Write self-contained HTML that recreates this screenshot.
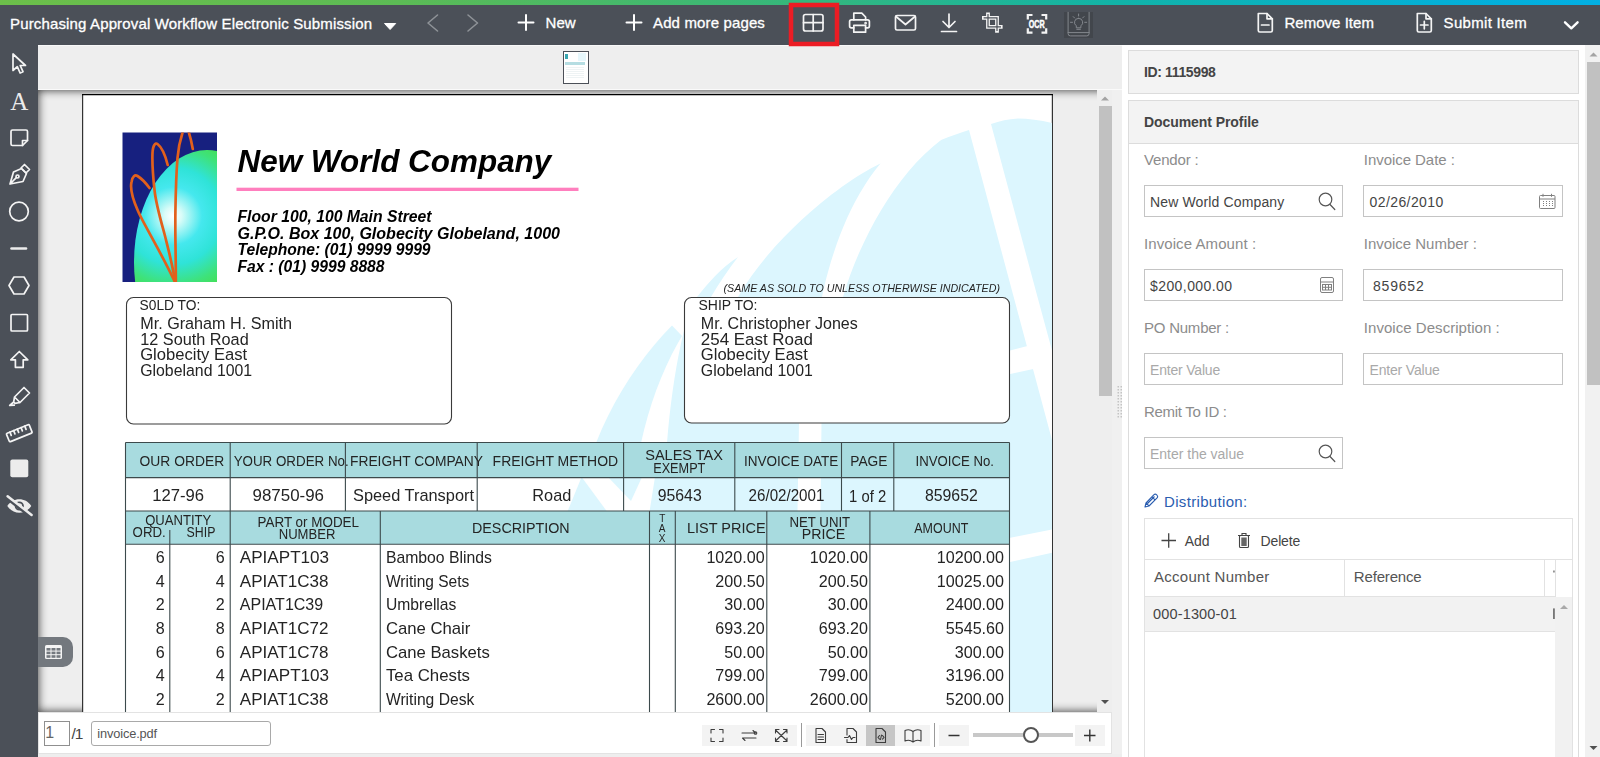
<!DOCTYPE html>
<html lang="en"><head><meta charset="utf-8"><title>Purchasing Approval Workflow Electronic Submission</title>
<style>
*{box-sizing:border-box}
html,body{margin:0;padding:0}
body{width:1600px;height:757px;overflow:hidden;position:relative;background:#fff;font-family:"Liberation Sans",sans-serif;}
.t{position:absolute;line-height:1;white-space:nowrap}
.abs{position:absolute}
#grad{left:0;top:0;width:1600px;height:5px;background:linear-gradient(90deg,#6cbf4a 0%,#5cbb55 25%,#35b77c 50%,#12b3a8 70%,#04b0d6 90%,#02afe3 100%)}
#topbar{left:0;top:5px;width:1600px;height:40px;background:#4b5058}
#side{left:0;top:45px;width:38px;height:712px;background:#4b5058}
#thumbs{left:38px;top:45px;width:1084px;height:45px;background:#eee;border-top:1px solid #f8f8f8;border-bottom:1px solid #fafafa}
#viewer{left:38px;top:90px;width:1074px;height:622px;background:#eee;overflow:hidden;box-shadow:inset 0 0 10px rgba(0,0,0,.8)}
#vscroll{left:1097px;top:90px;width:15px;height:622px;background:#eee}
#gap{left:1112px;top:90px;width:10px;height:667px;background:#f0f0f0}
#bbar{left:38px;top:712px;width:1074px;height:42px;background:#fff;border:1px solid #e3e3e3}
#bfoot{left:38px;top:754px;width:1084px;height:3px;background:#eee}
#panel{left:1122px;top:45px;width:478px;height:712px;background:#fff}
svg{position:absolute;overflow:visible}
svg text{font-family:"Liberation Sans",sans-serif}
.ic{fill:none;stroke:#f4f4f4;stroke-width:1.7;stroke-linecap:round;stroke-linejoin:round}
.inp{position:absolute;background:#fff;border:1px solid #c4c4c4;height:32px}
.box{position:absolute;background:#f3f3f3;border:1px solid #dcdcdc}
</style></head><body>

<div id="grad" class="abs"></div><div id="topbar" class="abs"></div><div id="side" class="abs"></div>
<div id="thumbs" class="abs"></div>
<div class="abs" id="toptext" style="left:0;top:0;width:1600px;height:45px;-webkit-text-stroke:0.300px #fff">
<span class="t" style="left:10.0px;top:16.3px;font-size:15px;color:#fff;letter-spacing:0.146px;">Purchasing Approval Workflow Electronic Submission</span>
<span class="t" style="left:545.5px;top:15.3px;font-size:15px;color:#fff;letter-spacing:0.098px;">New</span>
<span class="t" style="left:653.0px;top:15.3px;font-size:15px;color:#fff;letter-spacing:0.138px;">Add more pages</span>
<span class="t" style="left:1284.5px;top:15.3px;font-size:15px;color:#fff;letter-spacing:0.019px;">Remove Item</span>
<span class="t" style="left:1443.6px;top:15.3px;font-size:15px;color:#fff;letter-spacing:0.307px;">Submit Item</span>
</div>
<svg class="abs" style="left:0;top:0" width="1600" height="46" viewBox="0 0 1600 46">
<path d="M384.5 23.5h11.2l-5.6 6z" fill="#fff" stroke="#fff" stroke-width="1" stroke-linejoin="round"/>
<path d="M437.5 15l-9.5 8 9.5 8" fill="none" stroke="#8e9297" stroke-width="1.6" stroke-linecap="round" stroke-linejoin="round"/>
<path d="M468 15l9.5 8-9.5 8" fill="none" stroke="#8e9297" stroke-width="1.6" stroke-linecap="round" stroke-linejoin="round"/>
<path d="M518.5 22.5h15M526 15v15" stroke="#fff" stroke-width="2" stroke-linecap="round"/>
<path d="M626.5 22.5h15M634 15v15" stroke="#fff" stroke-width="2" stroke-linecap="round"/>
<rect x="791" y="5" width="46" height="39" fill="none" stroke="#ec1c24" stroke-width="4.5"/>
<g class="ic"><rect x="803.5" y="14.5" width="19.5" height="16.5" rx="2"/><path d="M813.2 14.5v16.5M803.5 22.7h19.5"/></g>
<g class="ic" stroke-width="1.800"><path d="M853.800 19.800v-6.600h8l3.800 3.800v2.800"/><path d="M853.800 27.800h-2.400a1.800 1.800 0 0 1-1.800-1.800v-4.400a1.800 1.800 0 0 1 1.800-1.800h16.200a1.800 1.800 0 0 1 1.800 1.800v4.400a1.800 1.800 0 0 1-1.800 1.800h-2"/><path d="M853.800 25.300v6.900h11.800v-6.900z"/><circle cx="865.600" cy="23.200" r=".500" fill="#fff"/></g>
<g class="ic"><rect x="895.5" y="15.5" width="20" height="14.5" rx="1.5"/><path d="M896 16.5l9.500 8 9.500-8"/></g>
<g class="ic"><path d="M949 14v13M943 21.500l6 6 6-6M941.500 31.500h15"/></g>
<g fill="none" stroke-linejoin="miter"><path d="M988 12.400V26.800H1002.600M982 17.800H997V32.700" stroke="#f4f4f4" stroke-width="3.800"/><path d="M988 14V26.800H1001M983.600 17.800H997V31.100" stroke="#4b5058" stroke-width="1.200"/></g>
<g fill="none" stroke="#f4f4f4" stroke-width="2.200"><path d="M1027.800 19.500v-4.500h4.700M1041.500 15h4.700v4.500M1046.200 28.200v4.500h-4.700M1032.500 32.700h-4.700v-4.500"/></g>
<text x="1028.7" y="27.7" font-size="10.8" font-weight="bold" textLength="16.0" lengthAdjust="spacingAndGlyphs" fill="#fff" stroke="#fff" stroke-width=".500">OCR</text>
<rect x="1064" y="12" width="29" height="26" fill="#42464c"/>
<g fill="none" stroke="#84888e" stroke-width="1" stroke-linecap="round"><path d="M1068.100 12.300v21.300a2.300 2.300 0 0 0 2.300 2.300h16.400a2.300 2.300 0 0 0 2.300-2.300v-21.300"/><path d="M1068.100 32.600h21"/><path d="M1078.600 18.300a4.100 4.100 0 0 0-2.300 7.500v2h4.600v-2a4.100 4.100 0 0 0-2.300-7.500zM1076.800 29.300h3.600M1078.600 14v2M1070.500 22.300h2M1084.700 22.300h2M1073.200 16.600l1.400 1.400M1084 16.600l-1.400 1.400"/></g>
<g class="ic"><path d="M1258.300 13.500h8.700l5.300 5.300v11.700a1.500 1.500 0 0 1-1.500 1.500h-11a1.500 1.500 0 0 1-1.500-1.500z"/><path d="M1267 13.500v5.300h5.300M1261.500 25h7.500"/></g>
<g class="ic"><path d="M1417.300 13.500h8.700l5.300 5.300v11.700a1.500 1.500 0 0 1-1.500 1.500h-11a1.500 1.500 0 0 1-1.500-1.500z"/><path d="M1426 13.500v5.300h5.300M1420.500 25h7.500M1424.300 21.300v7.500"/></g>
<path d="M1565 22.300l6.300 6 6.300-6" fill="none" stroke="#fff" stroke-width="2.4" stroke-linecap="round" stroke-linejoin="round"/>
</svg>
<svg class="abs" style="left:0;top:45px" width="38" height="712" viewBox="0 45 38 712">
<g class="ic" stroke="#ececec">
<path d="M13 54v16.500l4.300-3.800 2.800 6.300 2.900-1.300-2.800-6.200h5.300z"/>
<path d="M12.500 130h13.500a1.500 1.500 0 0 1 1.500 1.500v9l-5 5h-10a1.500 1.500 0 0 1-1.500-1.500v-12.500a1.500 1.500 0 0 1 1.500-1.500z"/><path d="M27.500 140.500h-5v5"/>
<path d="M10 184l3.500-12 8-3.500 5 5-3.500 8zM10 184l6.300-6.300"/><circle cx="17.500" cy="176.500" r="1.500"/><path d="M21 168l3.500-3.500 5 5-3.500 3.500z"/>
<circle cx="19" cy="211.500" r="9.300"/>
<path d="M9 285.500l5-8.500h10l5 8.500-5 8.500h-10z"/>
<rect x="11" y="314.500" width="16.500" height="16.500" rx="1"/>
<path d="M19.300 351.500l8.500 8.300h-4.600v7.500h-7.800v-7.500h-4.600z"/>
<path d="M14.500 397l9.500-9.500 5.500 5.500-9.500 9.500-5 .8-1.300-1.300zM14.500 397l5.500 5.500M13.700 402l-4 3.500 4.500-.3"/>
<g transform="rotate(-22 19.300 433.200)"><rect x="7" y="428.700" width="24.600" height="9" rx="1"/><path d="M11 428.700v3.500M15 428.700v3.500M19 428.700v3.500M23 428.700v3.500M27 428.700v3.500"/></g>
</g>
<path d="M11.500 248.500h14.500" stroke="#ececec" stroke-width="2.600" stroke-linecap="round"/>
<rect x="10.300" y="459.500" width="18" height="17.700" rx="2" fill="#ececec"/>
<path d="M7.300 506c3.200-4.700 7.300-6.700 12-6.700s8.800 2 12 6.700c-3.200 4.700-7.300 6.700-12 6.700s-8.800-2-12-6.700z" fill="#ececec"/><circle cx="19.300" cy="506" r="3.700" fill="none" stroke="#4b5058" stroke-width="1.800"/><path d="M5.800 497.200l25 19.600" stroke="#4b5058" stroke-width="3.200"/><path d="M7.600 496.200l24 18.700" stroke="#ececec" stroke-width="2.500" stroke-linecap="round"/>
</svg>
<span class="t" style="left:10.3px;top:88.5px;font-size:25px;color:#ececec;letter-spacing:-0.654px;font-family:'Liberation Serif',serif;">A</span>
<div class="abs" style="left:563px;top:51px;width:26px;height:33px;border:1.500px solid #4b5058;background:#fff;overflow:hidden">
<div class="abs" style="left:1px;top:2px;width:3px;height:5px;background:#3aa6b0"></div><div class="abs" style="left:1px;top:10px;width:20px;height:3px;background:#b5dde2"></div><div class="abs" style="left:14px;top:1px;width:8px;height:8px;background:#e6f7fc"></div><div class="abs" style="left:2px;top:14px;width:18px;height:13px;background:repeating-linear-gradient(180deg,#fff 0,#fff 1px,#eef3f4 1px,#eef3f4 2px)"></div>
</div>
<div id="viewer" class="abs">
<svg class="abs" style="left:0;top:0;will-change:transform" width="1074" height="622" viewBox="38 90 1074 622">
<defs><radialGradient id="glb" gradientUnits="userSpaceOnUse" cx="173" cy="216" r="88"><stop offset="0" stop-color="#ffffff"/><stop offset="0.1" stop-color="#d8fcf8"/><stop offset="0.33" stop-color="#45e8ee"/><stop offset="0.55" stop-color="#2fe3d8"/><stop offset="0.78" stop-color="#3ee27a"/><stop offset="1" stop-color="#48dd40"/></radialGradient><clipPath id="lg"><rect x="122.500" y="132.500" width="94.500" height="149.500"/></clipPath><clipPath id="pgc"><rect x="83" y="95" width="969" height="640"/></clipPath></defs>
<rect x="82" y="94" width="971" height="640" fill="#fff"/><path d="M82.600 94v640M1052.400 94v640" stroke="#333" stroke-width="1.200"/><path d="M82 94.600h971" stroke="#000" stroke-width="1.300"/>
<g clip-path="url(#pgc)" fill="#dcf6fe">
<path d="M672 325.500L682 336C664 366 650 402 641 443L641 470L597 470L596 443C614 398 640 358 672 325.500z"/><path d="M581.600 477L606.600 511L567.700 511z"/><path d="M608 477L642 477L631 501z"/>
<path d="M738 257C721 268 709 282 697 297 C 684 315 672 380 667 443 L 655 477 L 649.600 511 L 700 511 L 1060 511 L 1060 118 L1052 123 C1040 120 1028 118.500 1018 118.500 C 1008 119 1000 121 991 124 L969 130 C 960 133 950 136 941 140 C 918 150 898 158 880.400 163.400 C 838 184 772 238 738 297 L 711 297 C 719 283 728 270 738 257z"/>
<rect x="1009" y="505" width="44" height="240"/>
</g>
<g clip-path="url(#pgc)" fill="#fff">
<path d="M880.400 163.400 C 850 200 832 250 822 297 C 812 345 801 390 799 423 L 797.500 511 L 820.500 511 L 821.500 423 C 824 390 832 345 843 297 C 860 240 895 175 941 140 L 935 120 L 872 148z"/>
<path d="M966.300 120 L 989.900 120 L 991 124 L 1037.500 297 L 1060 380 L 1060 470 L 1013.700 297 L 969 130z"/>
<path d="M1009 350.700 L 1028.500 345.700 L 1034.500 368.800 L 1009 374.200z"/>
<path d="M1009 538 L 1053 529.400 L 1053 552.600 L 1009 562.200z"/>
<path d="M600 478 L 575 511 L 604 511 L 636 478z" fill="none"/>
</g>
<g clip-path="url(#lg)"><rect x="122" y="132" width="96" height="151" fill="#17207f"/><ellipse cx="207" cy="262" rx="73" ry="112" fill="url(#glb)"/>
<g fill="none" stroke="#e2601c" stroke-width="2.700" stroke-linecap="round"><path d="M175.400 283C160 250 144 225 138 211c-5-11-8-22-6.500-29 1-6 3.500-7.500 6-6 5 3 9 8 12 12"/><path d="M175.400 283C172 262 168 248 164.500 234c-5-18-8.500-30-10-44-1.500-14-2.500-26-2-37 .4-8 2.800-10.500 5-9 4 3 8 12 10.200 21"/><path d="M175.800 283C176 260 175 235 175.400 212c.3-20 .8-38 2.100-54 .9-10 2.500-18 5.500-27M188.400 131c2 6 3.300 12 4.400 18"/></g></g>
<text x="237.5" y="172.0" font-size="31.5" font-weight="bold" font-style="italic" textLength="313.8" lengthAdjust="spacingAndGlyphs" fill="#000">New World Company</text>
<rect x="236.500" y="187.700" width="342" height="3.300" fill="#ff7fbe"/>
<text x="237.5" y="222.1" font-size="16" font-weight="bold" font-style="italic" textLength="194.0" lengthAdjust="spacingAndGlyphs" fill="#000">Floor 100, 100 Main Street</text>
<text x="237.5" y="238.7" font-size="16" font-weight="bold" font-style="italic" textLength="322.5" lengthAdjust="spacingAndGlyphs" fill="#000">G.P.O. Box 100, Globecity Globeland, 1000</text>
<text x="237.5" y="255.3" font-size="16" font-weight="bold" font-style="italic" textLength="193.0" lengthAdjust="spacingAndGlyphs" fill="#000">Telephone: (01) 9999 9999</text>
<text x="237.5" y="271.9" font-size="16" font-weight="bold" font-style="italic" textLength="147.0" lengthAdjust="spacingAndGlyphs" fill="#000">Fax : (01) 9999 8888</text>
<rect x="126.500" y="297.500" width="325" height="126.500" rx="7" fill="#fff" stroke="#3a3a3a" stroke-width="1.100"/>
<rect x="684.500" y="297.500" width="325" height="125.500" rx="7" fill="#fff" stroke="#3a3a3a" stroke-width="1.100"/>
<text x="723.5" y="292.0" font-size="10.5" font-style="italic" textLength="276.5" lengthAdjust="spacingAndGlyphs" fill="#242424">(SAME AS SOLD TO UNLESS OTHERWISE INDICATED)</text>
<text x="139.6" y="310.0" font-size="14" textLength="60.7" lengthAdjust="spacingAndGlyphs" fill="#242424">S0LD TO:</text>
<text x="698.5" y="310.0" font-size="14" textLength="59.0" lengthAdjust="spacingAndGlyphs" fill="#242424">SHIP TO:</text>
<text x="140.2" y="329.0" font-size="16.3" textLength="151.8" lengthAdjust="spacingAndGlyphs" fill="#242424">Mr. Graham H. Smith</text>
<text x="140.2" y="344.6" font-size="16.3" textLength="108.5" lengthAdjust="spacingAndGlyphs" fill="#242424">12 South Road</text>
<text x="140.2" y="360.3" font-size="16.3" textLength="107.0" lengthAdjust="spacingAndGlyphs" fill="#242424">Globecity East</text>
<text x="140.2" y="375.9" font-size="16.3" textLength="112.0" lengthAdjust="spacingAndGlyphs" fill="#242424">Globeland 1001</text>
<text x="700.8" y="329.0" font-size="16.3" textLength="157.0" lengthAdjust="spacingAndGlyphs" fill="#242424">Mr. Christopher Jones</text>
<text x="700.8" y="344.6" font-size="16.3" textLength="112.0" lengthAdjust="spacingAndGlyphs" fill="#242424">254 East Road</text>
<text x="700.8" y="360.3" font-size="16.3" textLength="107.0" lengthAdjust="spacingAndGlyphs" fill="#242424">Globecity East</text>
<text x="700.8" y="375.9" font-size="16.3" textLength="112.0" lengthAdjust="spacingAndGlyphs" fill="#242424">Globeland 1001</text>
<rect x="125.500" y="442.500" width="884" height="35" fill="#a8dbdf"/>
<rect x="125.500" y="511" width="884" height="33.200" fill="#a8dbdf"/>
<rect x="125.500" y="544.200" width="884" height="190" fill="#fff"/>
<rect x="125.500" y="477.500" width="352" height="33.500" fill="#fff"/>
<g stroke="#3c4a4c" stroke-width="1.100" fill="none">
<path d="M125.500 442.500h884M125.500 477.600h884M125.500 511h884M125.500 544.200h884"/>
<path d="M125.500 442.500v300M1009.500 442.500v300"/>
<path d="M230.2 442.500v68.500"/>
<path d="M345.4 442.500v68.500"/>
<path d="M477.2 442.500v68.500"/>
<path d="M623.6 442.500v68.500"/>
<path d="M734.8 442.500v68.500"/>
<path d="M841.5 442.500v68.500"/>
<path d="M893.8 442.500v68.500"/>
<path d="M169.800 530v212"/>
<path d="M230.2 511v231"/>
<path d="M380.3 511v231"/>
<path d="M649.5 511v231"/>
<path d="M675.3 511v231"/>
<path d="M766.8 511v231"/>
<path d="M869.9 511v231"/>
</g>
<text x="139.6" y="466.0" font-size="14" textLength="84.6" lengthAdjust="spacingAndGlyphs" fill="#242424">OUR ORDER</text>
<text x="233.7" y="466.0" font-size="14" textLength="115.0" lengthAdjust="spacingAndGlyphs" fill="#242424">YOUR ORDER No.</text>
<text x="350.0" y="466.0" font-size="14" textLength="133.0" lengthAdjust="spacingAndGlyphs" fill="#242424">FREIGHT COMPANY</text>
<text x="492.6" y="466.0" font-size="14" textLength="125.5" lengthAdjust="spacingAndGlyphs" fill="#242424">FREIGHT METHOD</text>
<text x="645.2" y="459.6" font-size="14" textLength="77.8" lengthAdjust="spacingAndGlyphs" fill="#242424">SALES TAX</text>
<text x="653.2" y="472.7" font-size="14" textLength="52.2" lengthAdjust="spacingAndGlyphs" fill="#242424">EXEMPT</text>
<text x="744.0" y="466.0" font-size="14" textLength="94.4" lengthAdjust="spacingAndGlyphs" fill="#242424">INVOICE DATE</text>
<text x="850.3" y="466.0" font-size="14" textLength="37.2" lengthAdjust="spacingAndGlyphs" fill="#242424">PAGE</text>
<text x="915.6" y="466.0" font-size="14" textLength="78.3" lengthAdjust="spacingAndGlyphs" fill="#242424">INVOICE No.</text>
<text x="152.2" y="500.8" font-size="16.4" textLength="51.9" lengthAdjust="spacingAndGlyphs" fill="#242424">127-96</text>
<text x="252.5" y="500.8" font-size="16.4" textLength="71.5" lengthAdjust="spacingAndGlyphs" fill="#242424">98750-96</text>
<text x="353.0" y="500.8" font-size="16.4" textLength="121.0" lengthAdjust="spacingAndGlyphs" fill="#242424">Speed Transport</text>
<text x="532.3" y="500.8" font-size="16.4" textLength="39.0" lengthAdjust="spacingAndGlyphs" fill="#242424">Road</text>
<text x="657.7" y="500.8" font-size="16.4" textLength="44.0" lengthAdjust="spacingAndGlyphs" fill="#242424">95643</text>
<text x="748.6" y="500.8" font-size="16.4" textLength="75.8" lengthAdjust="spacingAndGlyphs" fill="#242424">26/02/2001</text>
<text x="849.1" y="502.0" font-size="16.4" textLength="37.1" lengthAdjust="spacingAndGlyphs" fill="#242424">1 of 2</text>
<text x="924.9" y="500.8" font-size="16.4" textLength="52.9" lengthAdjust="spacingAndGlyphs" fill="#242424">859652</text>
<text x="145.2" y="524.5" font-size="14" textLength="66.0" lengthAdjust="spacingAndGlyphs" fill="#242424">QUANTITY</text>
<text x="132.6" y="536.6" font-size="14" textLength="33.1" lengthAdjust="spacingAndGlyphs" fill="#242424">ORD.</text>
<text x="186.6" y="536.6" font-size="14" textLength="28.8" lengthAdjust="spacingAndGlyphs" fill="#242424">SHIP</text>
<text x="257.6" y="526.8" font-size="14" textLength="101.4" lengthAdjust="spacingAndGlyphs" fill="#242424">PART or MODEL</text>
<text x="278.7" y="538.9" font-size="14" textLength="56.7" lengthAdjust="spacingAndGlyphs" fill="#242424">NUMBER</text>
<text x="472.0" y="533.1" font-size="14" textLength="97.7" lengthAdjust="spacingAndGlyphs" fill="#242424">DESCRIPTION</text>
<text x="662.2" y="522.2" font-size="10" text-anchor="middle" fill="#242424">T</text>
<text x="662.2" y="532.0" font-size="10" text-anchor="middle" fill="#242424">A</text>
<text x="662.2" y="541.8" font-size="10" text-anchor="middle" fill="#242424">X</text>
<text x="687.0" y="533.1" font-size="14" textLength="78.6" lengthAdjust="spacingAndGlyphs" fill="#242424">LIST PRICE</text>
<text x="789.5" y="527.3" font-size="14" textLength="60.7" lengthAdjust="spacingAndGlyphs" fill="#242424">NET UNIT</text>
<text x="801.8" y="539.1" font-size="14" textLength="43.4" lengthAdjust="spacingAndGlyphs" fill="#242424">PRICE</text>
<text x="914.3" y="533.1" font-size="14" textLength="54.0" lengthAdjust="spacingAndGlyphs" fill="#242424">AMOUNT</text>
<text x="164.7" y="563.0" font-size="16.1" text-anchor="end" fill="#242424">6</text>
<text x="224.7" y="563.0" font-size="16.1" text-anchor="end" fill="#242424">6</text>
<text x="239.8" y="563.0" font-size="16.1" textLength="89.3" lengthAdjust="spacingAndGlyphs" fill="#242424">APIAPT103</text>
<text x="385.9" y="563.0" font-size="16.1" textLength="106.1" lengthAdjust="spacingAndGlyphs" fill="#242424">Bamboo Blinds</text>
<text x="764.6" y="563.0" font-size="16.1" text-anchor="end" fill="#242424">1020.00</text>
<text x="868.0" y="563.0" font-size="16.1" text-anchor="end" fill="#242424">1020.00</text>
<text x="1004.0" y="563.0" font-size="16.1" text-anchor="end" fill="#242424">10200.00</text>
<text x="164.7" y="586.6" font-size="16.1" text-anchor="end" fill="#242424">4</text>
<text x="224.7" y="586.6" font-size="16.1" text-anchor="end" fill="#242424">4</text>
<text x="239.8" y="586.6" font-size="16.1" textLength="88.6" lengthAdjust="spacingAndGlyphs" fill="#242424">APIAT1C38</text>
<text x="385.9" y="586.6" font-size="16.1" textLength="83.4" lengthAdjust="spacingAndGlyphs" fill="#242424">Writing Sets</text>
<text x="764.6" y="586.6" font-size="16.1" text-anchor="end" fill="#242424">200.50</text>
<text x="868.0" y="586.6" font-size="16.1" text-anchor="end" fill="#242424">200.50</text>
<text x="1004.0" y="586.6" font-size="16.1" text-anchor="end" fill="#242424">10025.00</text>
<text x="164.7" y="610.2" font-size="16.1" text-anchor="end" fill="#242424">2</text>
<text x="224.7" y="610.2" font-size="16.1" text-anchor="end" fill="#242424">2</text>
<text x="239.8" y="610.2" font-size="16.1" textLength="83.4" lengthAdjust="spacingAndGlyphs" fill="#242424">APIAT1C39</text>
<text x="385.9" y="610.2" font-size="16.1" textLength="70.5" lengthAdjust="spacingAndGlyphs" fill="#242424">Umbrellas</text>
<text x="764.6" y="610.2" font-size="16.1" text-anchor="end" fill="#242424">30.00</text>
<text x="868.0" y="610.2" font-size="16.1" text-anchor="end" fill="#242424">30.00</text>
<text x="1004.0" y="610.2" font-size="16.1" text-anchor="end" fill="#242424">2400.00</text>
<text x="164.7" y="633.9" font-size="16.1" text-anchor="end" fill="#242424">8</text>
<text x="224.7" y="633.9" font-size="16.1" text-anchor="end" fill="#242424">8</text>
<text x="239.8" y="633.9" font-size="16.1" textLength="88.6" lengthAdjust="spacingAndGlyphs" fill="#242424">APIAT1C72</text>
<text x="385.9" y="633.9" font-size="16.1" textLength="84.5" lengthAdjust="spacingAndGlyphs" fill="#242424">Cane Chair</text>
<text x="764.6" y="633.9" font-size="16.1" text-anchor="end" fill="#242424">693.20</text>
<text x="868.0" y="633.9" font-size="16.1" text-anchor="end" fill="#242424">693.20</text>
<text x="1004.0" y="633.9" font-size="16.1" text-anchor="end" fill="#242424">5545.60</text>
<text x="164.7" y="657.5" font-size="16.1" text-anchor="end" fill="#242424">6</text>
<text x="224.7" y="657.5" font-size="16.1" text-anchor="end" fill="#242424">6</text>
<text x="239.8" y="657.5" font-size="16.1" textLength="88.6" lengthAdjust="spacingAndGlyphs" fill="#242424">APIAT1C78</text>
<text x="385.9" y="657.5" font-size="16.1" textLength="103.9" lengthAdjust="spacingAndGlyphs" fill="#242424">Cane Baskets</text>
<text x="764.6" y="657.5" font-size="16.1" text-anchor="end" fill="#242424">50.00</text>
<text x="868.0" y="657.5" font-size="16.1" text-anchor="end" fill="#242424">50.00</text>
<text x="1004.0" y="657.5" font-size="16.1" text-anchor="end" fill="#242424">300.00</text>
<text x="164.7" y="681.1" font-size="16.1" text-anchor="end" fill="#242424">4</text>
<text x="224.7" y="681.1" font-size="16.1" text-anchor="end" fill="#242424">4</text>
<text x="239.8" y="681.1" font-size="16.1" textLength="89.3" lengthAdjust="spacingAndGlyphs" fill="#242424">APIAPT103</text>
<text x="385.9" y="681.1" font-size="16.1" textLength="84.1" lengthAdjust="spacingAndGlyphs" fill="#242424">Tea Chests</text>
<text x="764.6" y="681.1" font-size="16.1" text-anchor="end" fill="#242424">799.00</text>
<text x="868.0" y="681.1" font-size="16.1" text-anchor="end" fill="#242424">799.00</text>
<text x="1004.0" y="681.1" font-size="16.1" text-anchor="end" fill="#242424">3196.00</text>
<text x="164.7" y="704.7" font-size="16.1" text-anchor="end" fill="#242424">2</text>
<text x="224.7" y="704.7" font-size="16.1" text-anchor="end" fill="#242424">2</text>
<text x="239.8" y="704.7" font-size="16.1" textLength="88.6" lengthAdjust="spacingAndGlyphs" fill="#242424">APIAT1C38</text>
<text x="385.9" y="704.7" font-size="16.1" textLength="88.4" lengthAdjust="spacingAndGlyphs" fill="#242424">Writing Desk</text>
<text x="764.6" y="704.7" font-size="16.1" text-anchor="end" fill="#242424">2600.00</text>
<text x="868.0" y="704.7" font-size="16.1" text-anchor="end" fill="#242424">2600.00</text>
<text x="1004.0" y="704.7" font-size="16.1" text-anchor="end" fill="#242424">5200.00</text>
</svg>
<div class="abs" style="left:0;top:547px;width:35px;height:30px;background:#73787e;border-radius:0 10px 10px 0"></div>
<svg class="abs" style="left:7px;top:555px" width="17" height="14" viewBox="0 0 17 14"><rect x="0" y="0" width="17" height="14" rx="1.500" fill="#f4f4f4"/><g fill="#73787e"><rect x="1.500" y="3" width="4" height="2.600"/><rect x="6.500" y="3" width="4" height="2.600"/><rect x="11.500" y="3" width="4" height="2.600"/><rect x="1.500" y="6.600" width="4" height="2.600"/><rect x="6.500" y="6.600" width="4" height="2.600"/><rect x="11.500" y="6.600" width="4" height="2.600"/><rect x="1.500" y="10.200" width="4" height="2.600"/><rect x="6.500" y="10.200" width="4" height="2.600"/><rect x="11.500" y="10.200" width="4" height="2.600"/></g></svg>
</div>
<div id="vscroll" class="abs"><div class="abs" style="left:2px;top:16px;width:13px;height:290px;background:#c1c1c1"></div>
<svg class="abs" style="left:0;top:0" width="15" height="624"><path d="M4 10.500l4-4 4 4z" fill="#a3a3a3"/><path d="M4 610l4 4 4-4z" fill="#505050"/></svg></div>
<div id="gap" class="abs"></div>
<svg class="abs" style="left:1117px;top:385px" width="6" height="33"><g fill="#c4c4c4"><rect x="0.5" y="1" width="1.500" height="1.500"/><rect x="0.5" y="4" width="1.500" height="1.500"/><rect x="0.5" y="7" width="1.500" height="1.500"/><rect x="0.5" y="10" width="1.500" height="1.500"/><rect x="0.5" y="13" width="1.500" height="1.500"/><rect x="0.5" y="16" width="1.500" height="1.500"/><rect x="0.5" y="19" width="1.500" height="1.500"/><rect x="0.5" y="22" width="1.500" height="1.500"/><rect x="0.5" y="25" width="1.500" height="1.500"/><rect x="0.5" y="28" width="1.500" height="1.500"/><rect x="0.5" y="31" width="1.500" height="1.500"/><rect x="3.5" y="1" width="1.500" height="1.500"/><rect x="3.5" y="4" width="1.500" height="1.500"/><rect x="3.5" y="7" width="1.500" height="1.500"/><rect x="3.5" y="10" width="1.500" height="1.500"/><rect x="3.5" y="13" width="1.500" height="1.500"/><rect x="3.5" y="16" width="1.500" height="1.500"/><rect x="3.5" y="19" width="1.500" height="1.500"/><rect x="3.5" y="22" width="1.500" height="1.500"/><rect x="3.5" y="25" width="1.500" height="1.500"/><rect x="3.5" y="28" width="1.500" height="1.500"/><rect x="3.5" y="31" width="1.500" height="1.500"/></g></svg>
<div id="bbar" class="abs"></div><div id="bfoot" class="abs"></div>
<div class="abs" style="left:44px;top:721px;width:26px;height:25px;border:1px solid #8f8f8f;background:#fff"></div>
<div class="abs" style="left:91px;top:721px;width:180px;height:25px;border:1px solid #a9a9a9;border-radius:3px;background:#fff"></div>
<span class="t" style="left:45.3px;top:725.3px;font-size:16px;color:#666;">1</span>
<span class="t" style="left:71.5px;top:725.9px;font-size:15.5px;color:#444;letter-spacing:-0.963px;">/1</span>
<span class="t" style="left:97.2px;top:727.6px;font-size:12.8px;color:#555;letter-spacing:-0.125px;">invoice.pdf</span>
<div class="abs" style="left:702px;top:725px;width:95px;height:21px;background:#f3f3f3"></div>
<div class="abs" style="left:801px;top:723px;width:1px;height:24px;background:#9a9a9a"></div>
<div class="abs" style="left:806px;top:725px;width:124px;height:21px;background:#f3f3f3"></div>
<div class="abs" style="left:866px;top:725px;width:29px;height:21px;background:#c6c6c6"></div>
<div class="abs" style="left:934px;top:723px;width:1px;height:24px;background:#9a9a9a"></div>
<div class="abs" style="left:939px;top:725px;width:30px;height:21px;background:#f3f3f3"></div>
<div class="abs" style="left:1075px;top:725px;width:30px;height:21px;background:#f3f3f3"></div>
<div class="abs" style="left:973px;top:733px;width:100px;height:4px;background:#c8c8c8"></div>
<div class="abs" style="left:1023px;top:727px;width:16px;height:16px;border-radius:50%;border:2px solid #555;background:#fff"></div>
<svg class="abs" style="left:690px;top:713px" width="430" height="44" viewBox="690 713 430 44"><g fill="none" stroke="#3d3d3d" stroke-width="1.100" stroke-linecap="round" stroke-linejoin="round">
<path d="M711 733v-3.500h3.500M719.500 729.500h3.500v3.500M723 738v3.500h-3.500M714.500 741.500h-3.500v-3.500"/>
<path d="M742 733h13.500l-2.500-2.500M756 738h-13.500l2.500 2.500"/><circle cx="755.500" cy="733" r="1.300"/>
<path d="M775.500 730l11.500 11M787 730l-11.500 11M775.500 733v-3.500h3.500M783.500 729.500h3.500v3.500M787 738v3.500h-3.500M779 741.500h-3.500v-3.500"/>
<path d="M816 728.500h6l3.500 3.500v10.500h-9.500zM818 734.500h5.500M818 737h5.500M818 739.500h5.500"/>
<path d="M847 735v-6.500h6l3.500 3.500v10.500h-9.500v-3M844.500 737.500h3.500l1.500-2 2 4 1.500-2h2"/>
<path d="M876 728.500h6l3.500 3.500v10.500h-9.500zM879.500 735.500l-1.500 1.800 1.500 1.800M882.500 735.500l1.500 1.800-1.500 1.800M881.500 735l-1 4.500"/>
<path d="M913 731.500c-2.500-2-5.500-2-8-1v10.500c2.500-1 5.500-1 8 1 2.500-2 5.500-2 8-1v-10.500c-2.500-1-5.500-1-8 1zM913 731.500v10.500"/>
</g><path d="M948.500 735.500h11M1084 735.500h11.500M1089.800 729.500v12" stroke="#333" stroke-width="1.400"/></svg>
<div id="panel" class="abs"></div>
<div class="box" style="left:1128px;top:50px;width:451px;height:44px"></div>
<div class="abs" style="left:1128px;top:100px;width:451px;height:660px;border:1px solid #dcdcdc;background:#fff"></div>
<div class="box" style="left:1128px;top:100px;width:451px;height:44px"></div>
<span class="t" style="left:1144.0px;top:65.1px;font-size:14px;color:#444;letter-spacing:-0.365px;font-weight:bold;">ID: 1115998</span>
<span class="t" style="left:1144.0px;top:115.1px;font-size:14px;color:#444;letter-spacing:-0.069px;font-weight:bold;">Document Profile</span>
<span class="t" style="left:1144.0px;top:152.3px;font-size:15px;color:#8c8c8c;letter-spacing:-0.172px;">Vendor :</span>
<span class="t" style="left:1363.8px;top:152.3px;font-size:15px;color:#8c8c8c;letter-spacing:-0.051px;">Invoice Date :</span>
<span class="t" style="left:1144.0px;top:236.1px;font-size:15px;color:#8c8c8c;letter-spacing:0.080px;">Invoice Amount :</span>
<span class="t" style="left:1363.8px;top:236.1px;font-size:15px;color:#8c8c8c;letter-spacing:-0.024px;">Invoice Number :</span>
<span class="t" style="left:1144.0px;top:320.3px;font-size:15px;color:#8c8c8c;letter-spacing:-0.229px;">PO Number :</span>
<span class="t" style="left:1363.8px;top:320.3px;font-size:15px;color:#8c8c8c;letter-spacing:0.045px;">Invoice Description :</span>
<span class="t" style="left:1144.0px;top:404.3px;font-size:15px;color:#8c8c8c;letter-spacing:-0.283px;">Remit To ID :</span>
<div class="inp" style="left:1144px;top:185px;width:199px"></div>
<div class="inp" style="left:1363px;top:185px;width:200px"></div>
<div class="inp" style="left:1144px;top:269px;width:199px"></div>
<div class="inp" style="left:1363px;top:269px;width:200px"></div>
<div class="inp" style="left:1144px;top:353px;width:199px"></div>
<div class="inp" style="left:1363px;top:353px;width:200px"></div>
<div class="inp" style="left:1144px;top:437px;width:199px"></div>
<span class="t" style="left:1150.0px;top:194.5px;font-size:14px;color:#444;letter-spacing:0.141px;">New World Company</span>
<span class="t" style="left:1369.6px;top:194.5px;font-size:14px;color:#444;letter-spacing:0.393px;">02/26/2010</span>
<span class="t" style="left:1150.0px;top:278.9px;font-size:14px;color:#444;letter-spacing:0.422px;">$200,000.00</span>
<span class="t" style="left:1373.0px;top:278.9px;font-size:14px;color:#444;letter-spacing:0.797px;">859652</span>
<span class="t" style="left:1150.0px;top:363.1px;font-size:14px;color:#a9a9a9;letter-spacing:-0.193px;">Enter Value</span>
<span class="t" style="left:1369.6px;top:363.1px;font-size:14px;color:#a9a9a9;letter-spacing:-0.193px;">Enter Value</span>
<span class="t" style="left:1150.0px;top:447.1px;font-size:14px;color:#a9a9a9;letter-spacing:-0.011px;">Enter the value</span>
<svg class="abs" style="left:1122px;top:45px" width="478" height="712" viewBox="1122 45 478 712">
<g fill="none" stroke="#555" stroke-width="1.200" stroke-linecap="round"><circle cx="1325.500" cy="199.500" r="6.300"/><path d="M1330 204.500l4.800 5"/><circle cx="1325.500" cy="451.500" r="6.300"/><path d="M1330 456.500l4.800 5"/></g>
<g fill="none" stroke="#808080" stroke-width="1"><rect x="1539.500" y="195.500" width="15.500" height="13" rx="1"/><path d="M1539.500 199h15.500M1543 193.800v3M1551.500 193.800v3"/><path d="M1543.500 201v6M1546.500 201v6M1549.500 201v6M1552.500 201v6" stroke-dasharray="1 1"/></g>
<g fill="none" stroke="#808080" stroke-width="1"><rect x="1320.500" y="277.500" width="13" height="15" rx="1.500"/><path d="M1320.500 282h13"/><rect x="1322.500" y="284.500" width="9" height="5.500"/><path d="M1325.500 284.500v5.500M1328.500 284.500v5.500M1322.500 287.300h9"/></g>
<g fill="none" stroke="#2a5db0" stroke-width="1.100" stroke-linejoin="round"><path d="M1145 507l1-4 8-8.300a1.700 1.700 0 0 1 2.500 0l.6.600a1.700 1.700 0 0 1 0 2.500l-8.100 8.200zM1146 503l3 3M1152 496.800l3 3M1147.500 503.500l7-7"/></g>
</svg>
<span class="t" style="left:1164.0px;top:494.3px;font-size:15px;color:#2a5db0;letter-spacing:0.331px;">Distribution:</span>
<div class="abs" style="left:1144px;top:518px;width:429px;height:245px;border:1px solid #e2e2e2;background:#fff"></div>
<div class="abs" style="left:1145px;top:559px;width:427px;height:1px;background:#e2e2e2"></div>
<div class="abs" style="left:1145px;top:596px;width:411px;height:36px;background:#f2f2f2;border-top:1px solid #e2e2e2;border-bottom:1px solid #e2e2e2"></div>
<div class="abs" style="left:1555px;top:597px;width:17px;height:160px;background:#f1f1f1"></div>
<div class="abs" style="left:1344px;top:560px;width:1px;height:36px;background:#e2e2e2"></div>
<div class="abs" style="left:1544px;top:560px;width:1px;height:36px;background:#e2e2e2"></div>
<div class="abs" style="left:1555px;top:560px;width:1px;height:36px;background:#e2e2e2"></div>
<svg class="abs" style="left:1144px;top:518px" width="440" height="239" viewBox="1144 518 440 239"><path d="M1161.500 540.500h14.500M1168.700 533.300v14.500" stroke="#444" stroke-width="1.300"/><g fill="none" stroke="#444" stroke-width="1.100"><rect x="1239.500" y="535.500" width="9" height="12" rx="1"/><path d="M1238 535.500h12M1242 535.500v-2h4v2"/></g><rect x="1241.300" y="537.500" width="5.400" height="8.500" fill="#666"/><path d="M1560 609l4-4 4 4z" fill="#a9a9a9"/><rect x="1553.300" y="608.400" width="1.300" height="10.600" fill="#444"/><rect x="1553.300" y="570.500" width="1.300" height="2" fill="#666"/></svg>
<span class="t" style="left:1184.8px;top:534.4px;font-size:14px;color:#444;letter-spacing:-0.037px;">Add</span>
<span class="t" style="left:1260.6px;top:534.4px;font-size:14px;color:#444;letter-spacing:-0.178px;">Delete</span>
<span class="t" style="left:1154.0px;top:569.3px;font-size:15px;color:#555;letter-spacing:0.277px;">Account Number</span>
<span class="t" style="left:1353.8px;top:569.3px;font-size:15px;color:#555;letter-spacing:-0.167px;">Reference</span>
<span class="t" style="left:1153.0px;top:606.7px;font-size:14.5px;color:#444;letter-spacing:0.160px;">000-1300-01</span>
<div class="abs" style="left:1585px;top:45px;width:15px;height:712px;background:#f1f1f1"></div>
<div class="abs" style="left:1587px;top:62px;width:13px;height:323px;background:#c1c1c1"></div>
<svg class="abs" style="left:1585px;top:45px" width="15" height="712"><path d="M4.500 11.500l4-4 4 4z" fill="#a3a3a3"/><path d="M4.500 701l4 4 4-4z" fill="#505050"/></svg>
</body></html>
